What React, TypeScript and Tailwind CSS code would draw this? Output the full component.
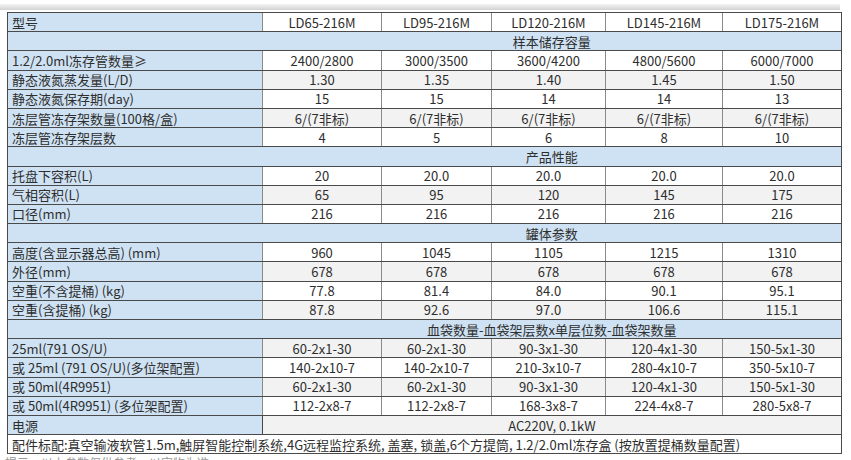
const font = { fontFamily: '"Noto Sans CJK SC", "Noto Sans", sans-serif' };

type Row =
  | { kind: "data"; label: string; values: string[] }
  | { kind: "section"; title: string }
  | { kind: "span"; label: string; value: string }
  | { kind: "note"; text: string };

const rows: Row[] = [
  { kind: "data", label: "型号", values: ["LD65-216M", "LD95-216M", "LD120-216M", "LD145-216M", "LD175-216M"] },
  { kind: "section", title: "样本储存容量" },
  { kind: "data", label: "1.2/2.0ml冻存管数量≥", values: ["2400/2800", "3000/3500", "3600/4200", "4800/5600", "6000/7000"] },
  { kind: "data", label: "静态液氮蒸发量(L/D)", values: ["1.30", "1.35", "1.40", "1.45", "1.50"] },
  { kind: "data", label: "静态液氮保存期(day)", values: ["15", "15", "14", "14", "13"] },
  { kind: "data", label: "冻层管冻存架数量(100格/盒)", values: ["6/(7非标)", "6/(7非标)", "6/(7非标)", "6/(7非标)", "6/(7非标)"] },
  { kind: "data", label: "冻层管冻存架层数", values: ["4", "5", "6", "8", "10"] },
  { kind: "section", title: "产品性能" },
  { kind: "data", label: "托盘下容积(L)", values: ["20", "20.0", "20.0", "20.0", "20.0"] },
  { kind: "data", label: "气相容积(L)", values: ["65", "95", "120", "145", "175"] },
  { kind: "data", label: "口径(mm)", values: ["216", "216", "216", "216", "216"] },
  { kind: "section", title: "罐体参数" },
  { kind: "data", label: "高度(含显示器总高) (mm)", values: ["960", "1045", "1105", "1215", "1310"] },
  { kind: "data", label: "外径(mm)", values: ["678", "678", "678", "678", "678"] },
  { kind: "data", label: "空重(不含提桶) (kg)", values: ["77.8", "81.4", "84.0", "90.1", "95.1"] },
  { kind: "data", label: "空重(含提桶) (kg)", values: ["87.8", "92.6", "97.0", "106.6", "115.1"] },
  { kind: "section", title: "血袋数量-血袋架层数x单层位数-血袋架数量" },
  { kind: "data", label: "25ml(791 OS/U)", values: ["60-2x1-30", "60-2x1-30", "90-3x1-30", "120-4x1-30", "150-5x1-30"] },
  { kind: "data", label: "或 25ml (791 OS/U)(多位架配置)", values: ["140-2x10-7", "140-2x10-7", "210-3x10-7", "280-4x10-7", "350-5x10-7"] },
  { kind: "data", label: "或 50ml(4R9951)", values: ["60-2x1-30", "60-2x1-30", "90-3x1-30", "120-4x1-30", "150-5x1-30"] },
  { kind: "data", label: "或 50ml(4R9951) (多位架配置)", values: ["112-2x8-7", "112-2x8-7", "168-3x8-7", "224-4x8-7", "280-5x8-7"] },
  { kind: "span", label: "电源", value: "AC220V, 0.1kW" },
  {
    kind: "note",
    text: "配件标配:真空输液软管1.5m,触屏智能控制系统,4G远程监控系统, 盖塞, 锁盖,6个方提筒, 1.2/2.0ml冻存盒 (按放置提桶数量配置)",
  },
];

const colWidths = ["w-[255px]", "w-[119px]", "w-[110px]", "w-[114px]", "w-[117px]", "w-[119px]"];

export default function App() {
  return (
    <div className="h-[460px] w-[851px] overflow-hidden bg-white text-[13px] leading-none text-[#2e2e2e]" style={font}>
      <div className="pt-[4px]">
        <div className="h-[6px] w-[840px] bg-gradient-to-b from-[#f4f4f4] to-[#d2d2d2]" />
      </div>
      <table className="ml-[7px] mt-[2px] w-[835px] table-fixed border-collapse">
        <colgroup>
          {colWidths.map((w, i) => (
            <col key={i} className={w} />
          ))}
        </colgroup>
        <tbody>
          {rows.map((row, i) => {
            const gray = i % 2 === 1;
            const dataBg = gray ? "bg-[#f2f2f2]" : "bg-white";
            const top = i === 0 ? "border-t border-t-[#4a4a4a]" : "";
            if (row.kind === "section") {
              return (
                <tr key={i} className="h-[19.2px]">
                  <td className={`border-b border-l border-[#4a4a4a] bg-[#cfe2f3] ${top}`} />
                  <td colSpan={5} className="border-b border-r border-[#4a4a4a] bg-[#cfe2f3] text-center">
                    {row.title}
                  </td>
                </tr>
              );
            }
            if (row.kind === "note") {
              return (
                <tr key={i} className="h-[19.2px]">
                  <td colSpan={6} className="whitespace-nowrap border border-[#4a4a4a] bg-white px-[4px] text-left">
                    {row.text}
                  </td>
                </tr>
              );
            }
            return (
              <tr key={i} className="h-[19.2px]">
                <td className={`whitespace-nowrap border-b border-l border-[#4a4a4a] bg-[#cfe2f3] px-[4px] text-left ${top}`}>
                  {row.label}
                </td>
                {row.kind === "span" ? (
                  <td colSpan={5} className={`border-b border-l border-r border-[#4a4a4a] text-center ${dataBg}`}>
                    {row.value}
                  </td>
                ) : (
                  row.values.map((v, j) => (
                    <td
                      key={j}
                      className={`border-b border-l border-b-[#4a4a4a] border-l-[#8a8a8a] text-center ${dataBg} ${top} ${
                        j === 4 ? "border-r border-r-[#4a4a4a]" : ""
                      }`}
                    >
                      {v}
                    </td>
                  ))
                )}
              </tr>
            );
          })}
        </tbody>
      </table>
      <div className="mt-[2px] pl-[5px] text-[12px] leading-[14px] text-[#999]">
        提示：以上参数仅供参考，以实物为准
      </div>
    </div>
  );
}
